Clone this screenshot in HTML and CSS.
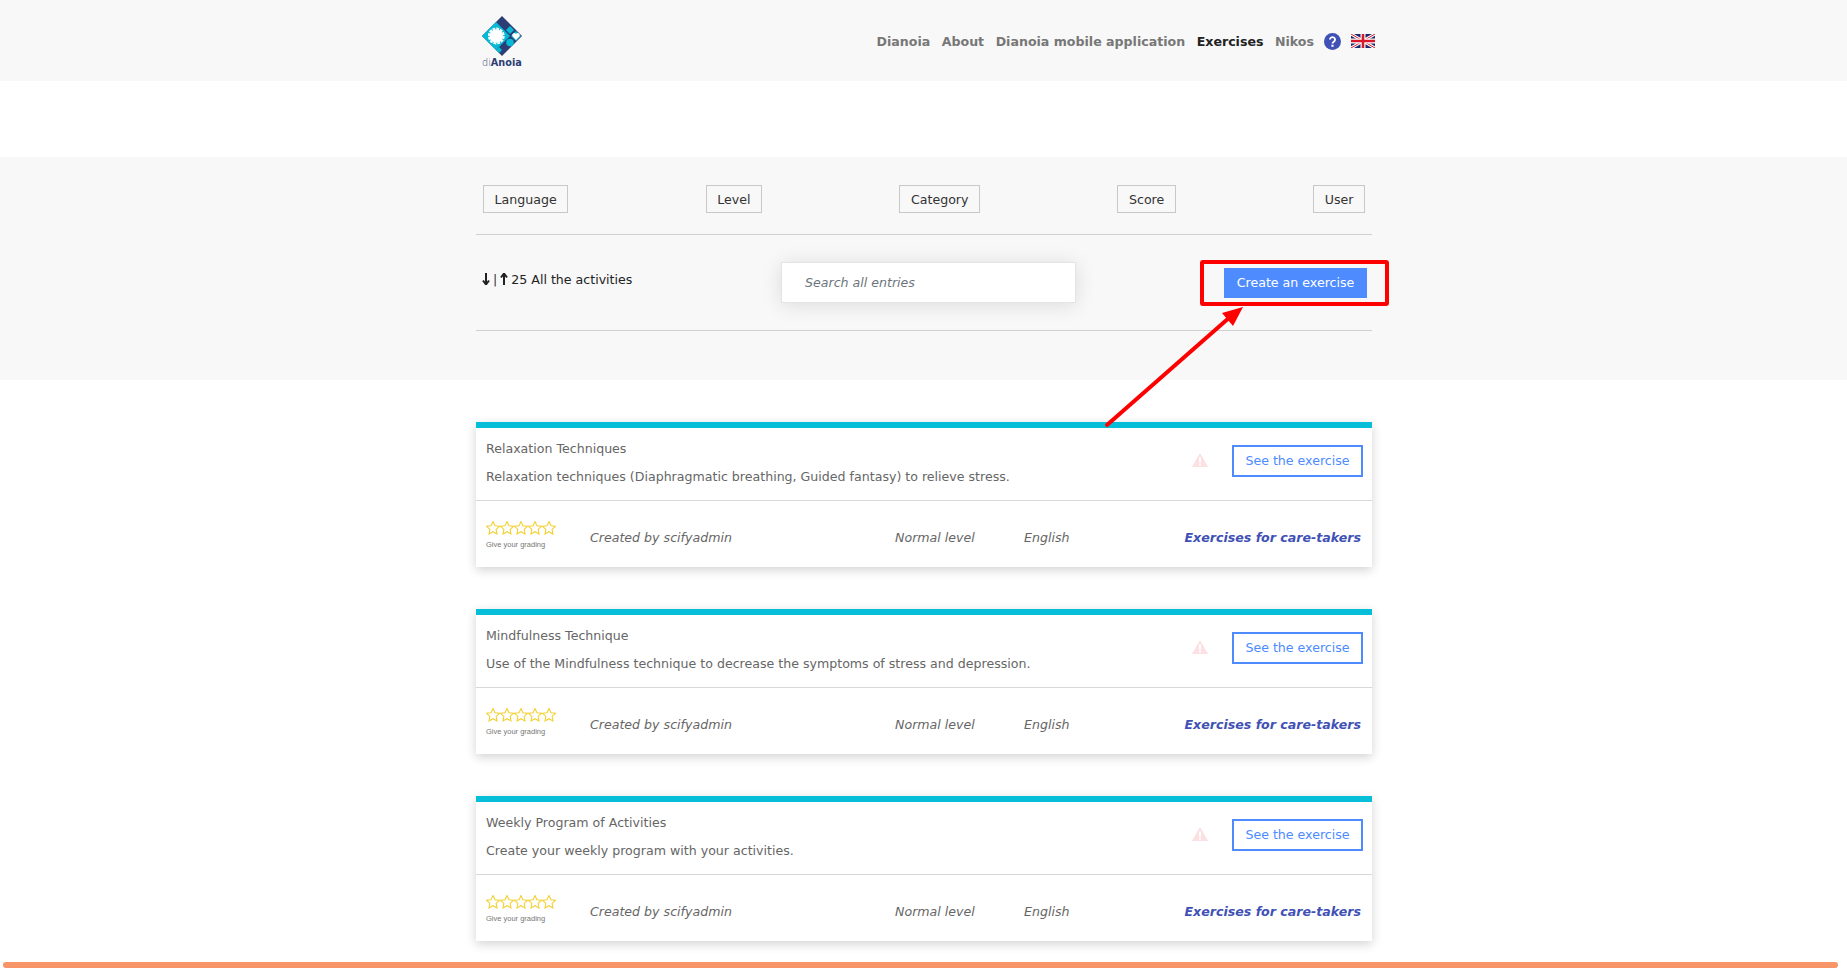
FILE: index.html
```html
<!DOCTYPE html>
<html lang="en">
<head>
<meta charset="UTF-8">
<title>Dianoia - Exercises</title>
<link rel="stylesheet" href="styles.css">
</head>
<body>

<header class="topbar">
  <div class="wrap topbar-inner">
    <a class="logo" href="#">
      <svg class="logo-mark" viewBox="0 0 40 40" width="40" height="40">
        <polygon points="20,0 40,20 20,40 0,20" fill="#2c3e74"/>
        <polygon points="14,6 28,20 14,34 0,20" fill="#06b9d6"/>
        <polygon points="14,34 17,37 20,34 17,31" fill="#06b9d6"/>
        <circle cx="14.300" cy="20" r="6.800" fill="#fff"/>
        <circle cx="14.300" cy="20" r="7.500" fill="none" stroke="#fff" stroke-width="1.800" stroke-dasharray="2.900 1"/>
        <polygon points="28,10 32,14 28,18 24,14" fill="#06b9d6"/>
        <polygon points="34,15 39,20 34,25 29,20" fill="#06b9d6"/>
        <path d="M34 24l-3.400-3.600a2 2 0 0 1 3.400-2.400a2 2 0 0 1 3.400 2.400z" fill="#fff"/>
        <circle cx="28" cy="26.500" r="3.800" fill="#06b9d6"/>
      </svg>
      <span class="logo-text"><i>di</i><b>Anoia</b></span>
    </a>
    <nav class="nav">
      <a href="#">Dianoia</a>
      <a href="#">About</a>
      <a href="#">Dianoia mobile application</a>
      <a href="#" class="active">Exercises</a>
      <a href="#">Nikos</a>
      <svg class="help" viewBox="0 0 16 16" width="17" height="17">
        <circle cx="8" cy="8" r="8" fill="#3f51b5"/>
        <path d="M5.600 6.200a2.400 2.300 0 1 1 3.600 2c-.8.5-1.200.8-1.200 1.700" fill="none" stroke="#fff" stroke-width="1.800"/>
        <rect x="7" y="11" width="2" height="2" fill="#fff"/>
      </svg>
      <svg class="flag" viewBox="0 0 24 14" width="24" height="14">
        <rect width="24" height="14" fill="#1a2a6c"/>
        <path d="M0 0L24 14M24 0L0 14" stroke="#fff" stroke-width="3"/>
        <path d="M0 0L24 14M24 0L0 14" stroke="#d8172b" stroke-width="1"/>
        <path d="M12 0V14M0 7H24" stroke="#fff" stroke-width="5"/>
        <path d="M12 0V14M0 7H24" stroke="#d8172b" stroke-width="2.600"/>
      </svg>
    </nav>
  </div>
</header>

<section class="filters">
  <div class="wrap">
    <div class="filter-row">
      <button class="filter-btn">Language</button>
      <button class="filter-btn">Level</button>
      <button class="filter-btn">Category</button>
      <button class="filter-btn">Score</button>
      <button class="filter-btn">User</button>
    </div>
    <div class="tools-row">
      <div class="sort">
        <svg viewBox="0 0 8 12" width="8" height="12"><path d="M4 0V10M1 7.500L4 11.500L7 7.500" fill="none" stroke="#222" stroke-width="2"/></svg>
        <span class="sort-sep">|</span>
        <svg viewBox="0 0 8 12" width="8" height="12"><path d="M4 12V2M1 4.500L4 .5L7 4.500" fill="none" stroke="#222" stroke-width="2"/></svg>
        <span>25 All the activities</span>
      </div>
      <input class="search" type="text" placeholder="Search all entries">
      <a class="create-btn" href="#">Create an exercise</a>
    </div>
  </div>
</section>

<main class="wrap cards">
  <article class="card">
    <div class="card-top">
      <div class="card-info">
        <h3>Relaxation Techniques</h3>
        <p>Relaxation techniques (Diaphragmatic breathing, Guided fantasy) to relieve stress.</p>
      </div>
      <svg class="warn" viewBox="0 0 16 14" width="16" height="14"><path d="M8 0L16 14H0z" fill="#fde0e1"/><rect x="7" y="4.500" width="2" height="5" fill="#fff"/><rect x="7" y="10.500" width="2" height="2" fill="#fff"/></svg>
      <a class="see-btn" href="#">See the exercise</a>
    </div>
    <div class="card-bottom">
      <div class="rating">
        <div class="stars">
          <svg viewBox=".5 .5 13 13" width="14" height="14"><path d="M7 1l1.800 3.900 4.200.5-3.100 2.900.8 4.200L7 10.400l-3.700 2.100.8-4.200L1 5.400l4.200-.5z" fill="none" stroke="#f3d02f"/></svg>
          <svg viewBox=".5 .5 13 13" width="14" height="14"><path d="M7 1l1.800 3.900 4.200.5-3.100 2.900.8 4.200L7 10.400l-3.700 2.100.8-4.200L1 5.400l4.200-.5z" fill="none" stroke="#f3d02f"/></svg>
          <svg viewBox=".5 .5 13 13" width="14" height="14"><path d="M7 1l1.800 3.900 4.200.5-3.100 2.900.8 4.200L7 10.400l-3.700 2.100.8-4.200L1 5.400l4.200-.5z" fill="none" stroke="#f3d02f"/></svg>
          <svg viewBox=".5 .5 13 13" width="14" height="14"><path d="M7 1l1.800 3.900 4.200.5-3.100 2.900.8 4.200L7 10.400l-3.700 2.100.8-4.200L1 5.400l4.200-.5z" fill="none" stroke="#f3d02f"/></svg>
          <svg viewBox=".5 .5 13 13" width="14" height="14"><path d="M7 1l1.800 3.900 4.200.5-3.100 2.900.8 4.200L7 10.400l-3.700 2.100.8-4.200L1 5.400l4.200-.5z" fill="none" stroke="#f3d02f"/></svg>
        </div>
        <div class="grading">Give your grading</div>
      </div>
      <span class="meta by">Created by scifyadmin</span>
      <span class="meta level">Normal level</span>
      <span class="meta lang">English</span>
      <a class="cat" href="#">Exercises for care-takers</a>
    </div>
  </article>

  <article class="card">
    <div class="card-top">
      <div class="card-info">
        <h3>Mindfulness Technique</h3>
        <p>Use of the Mindfulness technique to decrease the symptoms of stress and depression.</p>
      </div>
      <svg class="warn" viewBox="0 0 16 14" width="16" height="14"><path d="M8 0L16 14H0z" fill="#fde0e1"/><rect x="7" y="4.500" width="2" height="5" fill="#fff"/><rect x="7" y="10.500" width="2" height="2" fill="#fff"/></svg>
      <a class="see-btn" href="#">See the exercise</a>
    </div>
    <div class="card-bottom">
      <div class="rating">
        <div class="stars">
          <svg viewBox=".5 .5 13 13" width="14" height="14"><path d="M7 1l1.800 3.900 4.200.5-3.100 2.900.8 4.200L7 10.400l-3.700 2.100.8-4.200L1 5.400l4.200-.5z" fill="none" stroke="#f3d02f"/></svg>
          <svg viewBox=".5 .5 13 13" width="14" height="14"><path d="M7 1l1.800 3.900 4.200.5-3.100 2.900.8 4.200L7 10.400l-3.700 2.100.8-4.200L1 5.400l4.200-.5z" fill="none" stroke="#f3d02f"/></svg>
          <svg viewBox=".5 .5 13 13" width="14" height="14"><path d="M7 1l1.800 3.900 4.200.5-3.100 2.900.8 4.200L7 10.400l-3.700 2.100.8-4.200L1 5.400l4.200-.5z" fill="none" stroke="#f3d02f"/></svg>
          <svg viewBox=".5 .5 13 13" width="14" height="14"><path d="M7 1l1.800 3.900 4.200.5-3.100 2.900.8 4.200L7 10.400l-3.700 2.100.8-4.200L1 5.400l4.200-.5z" fill="none" stroke="#f3d02f"/></svg>
          <svg viewBox=".5 .5 13 13" width="14" height="14"><path d="M7 1l1.800 3.900 4.200.5-3.100 2.900.8 4.200L7 10.400l-3.700 2.100.8-4.200L1 5.400l4.200-.5z" fill="none" stroke="#f3d02f"/></svg>
        </div>
        <div class="grading">Give your grading</div>
      </div>
      <span class="meta by">Created by scifyadmin</span>
      <span class="meta level">Normal level</span>
      <span class="meta lang">English</span>
      <a class="cat" href="#">Exercises for care-takers</a>
    </div>
  </article>

  <article class="card">
    <div class="card-top">
      <div class="card-info">
        <h3>Weekly Program of Activities</h3>
        <p>Create your weekly program with your activities.</p>
      </div>
      <svg class="warn" viewBox="0 0 16 14" width="16" height="14"><path d="M8 0L16 14H0z" fill="#fde0e1"/><rect x="7" y="4.500" width="2" height="5" fill="#fff"/><rect x="7" y="10.500" width="2" height="2" fill="#fff"/></svg>
      <a class="see-btn" href="#">See the exercise</a>
    </div>
    <div class="card-bottom">
      <div class="rating">
        <div class="stars">
          <svg viewBox=".5 .5 13 13" width="14" height="14"><path d="M7 1l1.800 3.900 4.200.5-3.100 2.900.8 4.200L7 10.400l-3.700 2.100.8-4.200L1 5.400l4.200-.5z" fill="none" stroke="#f3d02f"/></svg>
          <svg viewBox=".5 .5 13 13" width="14" height="14"><path d="M7 1l1.800 3.900 4.200.5-3.100 2.900.8 4.200L7 10.400l-3.700 2.100.8-4.200L1 5.400l4.200-.5z" fill="none" stroke="#f3d02f"/></svg>
          <svg viewBox=".5 .5 13 13" width="14" height="14"><path d="M7 1l1.800 3.900 4.200.5-3.100 2.900.8 4.200L7 10.400l-3.700 2.100.8-4.200L1 5.400l4.200-.5z" fill="none" stroke="#f3d02f"/></svg>
          <svg viewBox=".5 .5 13 13" width="14" height="14"><path d="M7 1l1.800 3.900 4.200.5-3.100 2.900.8 4.200L7 10.400l-3.700 2.100.8-4.200L1 5.400l4.200-.5z" fill="none" stroke="#f3d02f"/></svg>
          <svg viewBox=".5 .5 13 13" width="14" height="14"><path d="M7 1l1.800 3.900 4.200.5-3.100 2.900.8 4.200L7 10.400l-3.700 2.100.8-4.200L1 5.400l4.200-.5z" fill="none" stroke="#f3d02f"/></svg>
        </div>
        <div class="grading">Give your grading</div>
      </div>
      <span class="meta by">Created by scifyadmin</span>
      <span class="meta level">Normal level</span>
      <span class="meta lang">English</span>
      <a class="cat" href="#">Exercises for care-takers</a>
    </div>
  </article>
</main>

<svg class="annotation" viewBox="0 0 1847 971" width="1847" height="971">
  <rect x="1202" y="262" width="185" height="42" rx="1" fill="none" stroke="#fe0000" stroke-width="4"/>
  <path d="M1107 425L1230 317" stroke="#fe0000" stroke-width="4" stroke-linecap="round"/>
  <polygon points="1243,307 1233,326 1222,313" fill="#fe0000"/>
</svg>

<div class="progress-line"></div>

</body>
</html>
```

FILE: styles.css
```css
html, body {
  height: 100%;
}
body {
  font-family: "DejaVu Sans", sans-serif;
  font-size: 12.600px;
  background-color: #fff;
  color: #666;
  margin: 0;
  padding-left: 1px;
  overflow: hidden;
  position: relative;
}
a {
  text-decoration: none;
}
.wrap {
  width: 896px;
  margin: 0 auto;
}

/* header */
.topbar {
  background-color: #f8f8f8;
  height: 81px;
  margin-left: -1px;
  padding-left: 1px;
  margin-bottom: 76px;
}
.topbar-inner {
  display: flex;
  align-items: flex-start;
  justify-content: space-between;
}
.logo {
  display: flex;
  flex-direction: column;
  align-items: flex-start;
  margin: 16px 0 0 6px;
}
.logo-mark {
  display: block;
}
.logo-text {
  font-size: 9.700px;
  line-height: 12px;
  color: #2c3e74;
  margin-top: 1px;
}
.logo-text i {
  font-style: normal;
  font-weight: 200;
}
.nav {
  display: flex;
  align-items: center;
  gap: 11.500px;
  height: 82px;
  margin-right: -3px;
}
.nav a {
  color: #777;
  font-weight: bold;
}
.nav a.active {
  color: #222;
}
.help {
  margin-left: -2px;
}
.flag {
  margin-left: -1px;
}

/* filter band */
.filters {
  background-color: #f8f8f8;
  height: 223px;
  margin-left: -1px;
  padding-left: 1px;
  box-sizing: border-box;
  padding-top: 28px;
}
.filter-row {
  display: flex;
  justify-content: space-between;
  padding: 0 7px 21px;
  border-bottom: 1px solid #d0d0d0;
}
.filter-btn {
  font-family: inherit;
  font-size: 12.600px;
  height: 28px;
  padding: 0 10.500px;
  color: #333;
  background: transparent;
  border: 1px solid #c8c8c8;
}
.tools-row {
  display: flex;
  align-items: flex-start;
  height: 96px;
  box-sizing: border-box;
  padding: 28px 5px 0 6px;
  border-bottom: 1px solid #d0d0d0;
}
.sort {
  width: 299px;
  display: flex;
  align-items: center;
  gap: 3px;
  height: 36px;
  margin-top: -2px;
  color: #222;
}
.sort-sep {
  color: #333;
}
.search {
  width: 295px;
  height: 41px;
  box-sizing: border-box;
  margin-top: -1px;
  padding: 0 23px;
  font-family: inherit;
  font-size: 12.600px;
  font-style: italic;
  background-color: #fff;
  border: 1px solid #e4e4e4;
  box-shadow: 0 2px 20px rgba(0, 0, 0, 0.12);
  outline: none;
}
.search::placeholder {
  color: #6c757d;
  opacity: 1;
}
.create-btn {
  margin-left: auto;
  margin-top: 5px;
  width: 143px;
  height: 30px;
  line-height: 30px;
  text-align: center;
  background-color: #4d8bff;
  color: #fff;
}

/* exercise cards */
.cards {
  padding-top: 42px;
}
.card {
  border-top: 6px solid #06bed8;
  height: 145px;
  box-sizing: border-box;
  margin-bottom: 42px;
  background-color: #fff;
  box-shadow: 0 3px 10px rgba(0, 0, 0, 0.18);
}
.card-top {
  display: flex;
  align-items: flex-start;
  height: 73px;
  box-sizing: border-box;
  padding: 11px 9px 0 10px;
  border-bottom: 1px solid #d8d8d8;
}
.card-info {
  flex: 1;
}
.card-info h3 {
  font-size: 12.600px;
  font-weight: normal;
  line-height: 20px;
  margin: 0 0 8px;
}
.card-info p {
  margin: 0;
  line-height: 20px;
}
.warn {
  margin: 14px 24px 0 0;
}
.see-btn {
  width: 131px;
  height: 32px;
  line-height: 28px;
  margin-top: 6px;
  box-sizing: border-box;
  text-align: center;
  border: 2px solid #4d8bff;
  color: #4d8bff;
}
.card-bottom {
  display: flex;
  align-items: center;
  height: 66px;
  box-sizing: border-box;
  padding: 6px 11px 0 10px;
}
.rating {
  width: 104px;
  margin-top: -4px;
}
.stars {
  display: flex;
  height: 14px;
}
.grading {
  font-family: "Liberation Sans", sans-serif;
  font-size: 7.500px;
  margin-top: 5px;
  color: #777;
}
.meta {
  font-style: italic;
}
.by {
  width: 305px;
}
.level {
  width: 129px;
}
.lang {
  width: 60px;
}
.cat {
  margin-left: auto;
  color: #3f51b5;
  font-weight: bold;
  font-style: italic;
}

/* overlays */
.annotation {
  position: absolute;
  top: 0;
  left: 0;
  pointer-events: none;
}
.progress-line {
  position: fixed;
  left: 3px;
  right: 9px;
  bottom: 3px;
  height: 6px;
  border-radius: 3px;
  background-color: #f79468;
}
```
